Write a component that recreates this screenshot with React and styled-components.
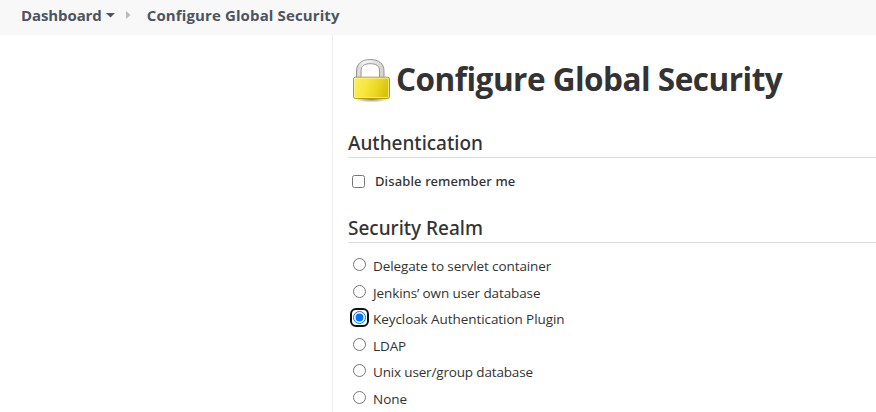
import React from "react";
import styled, { createGlobalStyle } from "styled-components";

const GlobalStyle = createGlobalStyle`
  * { box-sizing: border-box; }
  body {
    margin: 0;
    height: 412px;
    overflow: hidden;
    background: #fff;
    color: #333;
    font-family: "Open Sans", "Noto Sans", sans-serif;
    font-size: 13.5px;
  }
`;

const Page = styled.div`
  display: flex;
  flex-direction: column;
  height: 412px;
  overflow: hidden;
`;

const Breadcrumbs = styled.nav`
  display: flex;
  align-items: center;
  flex: none;
  height: 35px;
  padding: 0 0 5px 21px;
  background: #f8f8f8;
  color: #4d545d;
`;

const Crumb = styled.span`
  font-size: 15px;
  font-weight: 700;
  line-height: 20px;
  white-space: nowrap;
  letter-spacing: ${(p) => p.$spacing || 0}px;
`;

const Caret = styled.svg`
  width: 9px;
  height: 5px;
  margin: 0 11px 0 4px;
`;

const Separator = styled.svg`
  width: 5px;
  height: 8px;
  margin-right: 16px;
`;

const Body = styled.div`
  display: flex;
  flex: 1;
  min-height: 0;
`;

const SidePanel = styled.aside`
  flex: none;
  width: 333px;
  border-right: 1px solid #eee;
`;

const Main = styled.main`
  flex: 1;
  min-width: 0;
  padding: 20px 0 0 15px;
`;

const TitleRow = styled.div`
  display: flex;
  align-items: center;
  height: 48px;
`;

const LockIcon = styled.svg`
  width: 48px;
  height: 48px;
  flex: none;
`;

const Title = styled.h1`
  margin: 0;
  font-size: 31.5px;
  line-height: 48px;
  font-weight: 700;
  white-space: nowrap;
  letter-spacing: -0.5px;
`;

const Section = styled.section`
  margin-top: ${(p) => p.$gap}px;
`;

const SectionTitle = styled.h2`
  height: 30px;
  margin: 0;
  border-bottom: 1px solid #dcdcdc;
  font-family: "Noto Sans", "Open Sans", sans-serif;
  font-size: 19px;
  font-weight: 500;
  line-height: 31px;
`;

const CheckRow = styled.label`
  display: flex;
  align-items: center;
  height: 19px;
  margin-top: 14px;
  padding-left: 4px;
`;

const Checkbox = styled.input`
  width: 13px;
  height: 13px;
  margin: 0 10px 0 0;
`;

const Label = styled.span`
  white-space: nowrap;
  letter-spacing: ${(p) => p.$spacing || 0}px;
`;

const StrongLabel = styled(Label)`
  font-family: "Noto Sans", "Open Sans", sans-serif;
  font-size: 13px;
  font-weight: 500;
  line-height: 18px;
  padding-bottom: 1px;
`;

const Options = styled.div`
  padding: 10px 0 0 2px;
`;

const Option = styled.label`
  display: flex;
  align-items: center;
  height: 26.5px;
`;

const RadioRing = styled.span`
  display: flex;
  align-items: center;
  justify-content: center;
  flex: none;
  width: 19px;
  height: 19px;
  margin: 0 4px 3px 0;
  border: 2px solid ${(p) => (p.$focused ? "#101010" : "transparent")};
  border-radius: 6px;
`;

const Radio = styled.input`
  flex: none;
  width: 13px;
  height: 13px;
  margin: 0;
`;

const REALMS = [
  { name: "Delegate to servlet container", spacing: -0.1 },
  { name: "Jenkins’ own user database", spacing: -0.1 },
  { name: "Keycloak Authentication Plugin", spacing: -0.07 },
  { name: "LDAP", spacing: -0.1 },
  { name: "Unix user/group database", spacing: -0.16 },
  { name: "None", spacing: 0 },
];

function Lock() {
  return (
    <LockIcon viewBox="0 0 48 48" aria-hidden="true">
      <defs>
        <linearGradient id="lockBody" x1="0" y1="0" x2="1" y2="0.2">
          <stop offset="0" stopColor="#fcf05a" />
          <stop offset="0.4" stopColor="#f7e73e" />
          <stop offset="0.75" stopColor="#e9d521" />
          <stop offset="1" stopColor="#dac20e" />
        </linearGradient>
        <linearGradient id="lockShackle" x1="0" y1="0" x2="1" y2="0">
          <stop offset="0" stopColor="#d2d4d0" />
          <stop offset="0.3" stopColor="#f4f4f2" />
          <stop offset="1" stopColor="#d0d2ce" />
        </linearGradient>
        <radialGradient id="lockShadow">
          <stop offset="0" stopColor="#000" stopOpacity="0.5" />
          <stop offset="1" stopColor="#000" stopOpacity="0" />
        </radialGradient>
      </defs>
      <ellipse cx="23.5" cy="44" rx="17" ry="3.5" fill="url(#lockShadow)" />
      <path
        d="M8.5 25V16C8.5 8.500 14 4.500 22.300 4.500S36 8.500 36 16V25H31.500V16C31.500 11 28.500 8.700 22.300 8.700S13 11 13 16V25Z"
        fill="url(#lockShackle)"
        stroke="#8b8d89"
        strokeWidth="0.9"
      />
      <rect x="5.5" y="22.2" width="36" height="21.3" rx="2" fill="url(#lockBody)" stroke="#b09a18" />
      <rect x="6.5" y="23.2" width="34" height="19.3" rx="1" fill="none" stroke="#fffbb0" strokeOpacity="0.65" />
    </LockIcon>
  );
}

export default function App() {
  return (
    <Page>
      <GlobalStyle />
      <Breadcrumbs>
        <Crumb $spacing={-0.1}>Dashboard</Crumb>
        <Caret viewBox="0 0 9 5">
          <path d="M0 0H9L4.5 4.500Z" fill="#4d545d" />
        </Caret>
        <Separator viewBox="0 0 5 8">
          <path d="M0 0L4.500 4L0 8Z" fill="#bbb" />
        </Separator>
        <Crumb $spacing={0.12}>Configure Global Security</Crumb>
      </Breadcrumbs>
      <Body>
        <SidePanel />
        <Main>
          <TitleRow>
            <Lock />
            <Title>Configure Global Security</Title>
          </TitleRow>
          <Section $gap={25}>
            <SectionTitle>Authentication</SectionTitle>
            <CheckRow>
              <Checkbox type="checkbox" />
              <StrongLabel $spacing={0.12}>Disable remember me</StrongLabel>
            </CheckRow>
          </Section>
          <Section $gap={22}>
            <SectionTitle>Security Realm</SectionTitle>
            <Options>
              {REALMS.map((realm, i) => (
                <Option key={realm.name}>
                  <RadioRing $focused={i === 2}>
                    <Radio type="radio" name="realm" checked={i === 2} readOnly />
                  </RadioRing>
                  <Label $spacing={realm.spacing}>{realm.name}</Label>
                </Option>
              ))}
            </Options>
          </Section>
        </Main>
      </Body>
    </Page>
  );
}
